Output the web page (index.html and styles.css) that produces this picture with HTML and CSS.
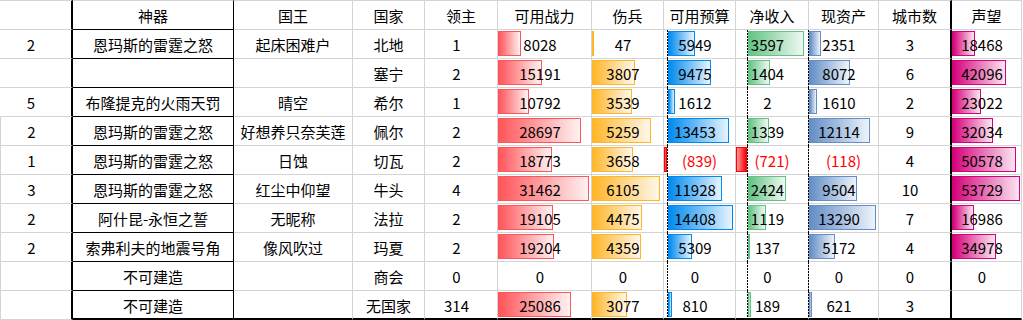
FILE: index.html
```html
<!DOCTYPE html>
<html lang="zh-CN">
<head>
<meta charset="utf-8">
<title>国家统计</title>
<link rel="stylesheet" href="styles.css">
</head>
<body>
<div class="sheet">
  <!-- header -->
  <div class="c h ca"></div>
  <div class="c h ck"><span>神器</span></div>
  <div class="c h"><span>国王</span></div>
  <div class="c h"><span>国家</span></div>
  <div class="c h"><span>领主</span></div>
  <div class="c h"><span>可用战力</span></div>
  <div class="c h"><span>伤兵</span></div>
  <div class="c h"><span>可用预算</span></div>
  <div class="c h"><span>净收入</span></div>
  <div class="c h"><span>现资产</span></div>
  <div class="c h cc"><span>城市数</span></div>
  <div class="c h"><span>声望</span></div>

  <!-- row 1 -->
  <div class="c ca n"><span>2</span></div>
  <div class="c ck"><span>恩玛斯的雷霆之怒</span></div>
  <div class="c"><span>起床困难户</span></div>
  <div class="c"><span>北地</span></div>
  <div class="c n"><span>1</span></div>
  <div class="c n cz"><i class="bar red pos" style="width:23px"></i><span>8028</span></div>
  <div class="c n cs"><i class="bar org pos" style="width:1px"></i><span>47</span></div>
  <div class="c n cy"><i class="ax"></i><i class="bar lbl pos" style="width:27px"></i><span>5949</span></div>
  <div class="c n cj"><i class="ax"></i><i class="bar grn pos" style="width:56px"></i><span>3597</span></div>
  <div class="c n cx"><i class="ax"></i><i class="bar blu pos" style="width:12px"></i><span>2351</span></div>
  <div class="c n cc"><span>3</span></div>
  <div class="c n cp"><i class="bar pur pos" style="width:23px"></i><span>18468</span></div>

  <!-- row 2 -->
  <div class="c ca"></div>
  <div class="c ck"></div>
  <div class="c"></div>
  <div class="c"><span>塞宁</span></div>
  <div class="c n"><span>2</span></div>
  <div class="c n cz"><i class="bar red pos" style="width:44px"></i><span>15191</span></div>
  <div class="c n cs"><i class="bar org pos" style="width:43px"></i><span>3807</span></div>
  <div class="c n cy"><i class="ax"></i><i class="bar lbl pos" style="width:43px"></i><span>9475</span></div>
  <div class="c n cj"><i class="ax"></i><i class="bar grn pos" style="width:22px"></i><span>1404</span></div>
  <div class="c n cx"><i class="ax"></i><i class="bar blu pos" style="width:41px"></i><span>8072</span></div>
  <div class="c n cc"><span>6</span></div>
  <div class="c n cp"><i class="bar pur pos" style="width:54px"></i><span>42096</span></div>

  <!-- row 3 -->
  <div class="c ca n"><span>5</span></div>
  <div class="c ck"><span>布隆提克的火雨天罚</span></div>
  <div class="c"><span>晴空</span></div>
  <div class="c"><span>希尔</span></div>
  <div class="c n"><span>1</span></div>
  <div class="c n cz"><i class="bar red pos" style="width:31px"></i><span>10792</span></div>
  <div class="c n cs"><i class="bar org pos" style="width:40px"></i><span>3539</span></div>
  <div class="c n cy"><i class="ax"></i><i class="bar lbl pos" style="width:7px"></i><span>1612</span></div>
  <div class="c n cj"><i class="ax"></i><span>2</span></div>
  <div class="c n cx"><i class="ax"></i><i class="bar blu pos" style="width:8px"></i><span>1610</span></div>
  <div class="c n cc"><span>2</span></div>
  <div class="c n cp"><i class="bar pur pos" style="width:29px"></i><span>23022</span></div>

  <!-- row 4 -->
  <div class="c ca n lb"><span>2</span></div>
  <div class="c ck"><span>恩玛斯的雷霆之怒</span></div>
  <div class="c"><span>好想养只奈芙莲</span></div>
  <div class="c"><span>佩尔</span></div>
  <div class="c n"><span>2</span></div>
  <div class="c n cz"><i class="bar red pos" style="width:83px"></i><span>28697</span></div>
  <div class="c n cs"><i class="bar org pos" style="width:59px"></i><span>5259</span></div>
  <div class="c n cy"><i class="ax"></i><i class="bar lbl pos" style="width:61px"></i><span>13453</span></div>
  <div class="c n cj"><i class="ax"></i><i class="bar grn pos" style="width:21px"></i><span>1339</span></div>
  <div class="c n cx"><i class="ax"></i><i class="bar blu pos" style="width:61px"></i><span>12114</span></div>
  <div class="c n cc"><span>9</span></div>
  <div class="c n cp"><i class="bar pur pos" style="width:41px"></i><span>32034</span></div>

  <!-- row 5 -->
  <div class="c ca n lb"><span>1</span></div>
  <div class="c ck"><span>恩玛斯的雷霆之怒</span></div>
  <div class="c"><span>日蚀</span></div>
  <div class="c"><span>切瓦</span></div>
  <div class="c n"><span>2</span></div>
  <div class="c n cz"><i class="bar red pos" style="width:54px"></i><span>18773</span></div>
  <div class="c n cs"><i class="bar org pos" style="width:41px"></i><span>3658</span></div>
  <div class="c neg cy"><i class="ax"></i><i class="bar ng" style="width:3px"></i><span>(839)</span></div>
  <div class="c neg cj"><i class="ax"></i><i class="bar ng" style="width:11px"></i><span>(721)</span></div>
  <div class="c neg cx"><i class="ax"></i><span>(118)</span></div>
  <div class="c n cc"><span>4</span></div>
  <div class="c n cp"><i class="bar pur pos" style="width:64px"></i><span>50578</span></div>

  <!-- row 6 -->
  <div class="c ca n lb"><span>3</span></div>
  <div class="c ck"><span>恩玛斯的雷霆之怒</span></div>
  <div class="c"><span>红尘中仰望</span></div>
  <div class="c"><span>牛头</span></div>
  <div class="c n"><span>4</span></div>
  <div class="c n cz"><i class="bar red pos" style="width:91px"></i><span>31462</span></div>
  <div class="c n cs"><i class="bar org pos" style="width:68px"></i><span>6105</span></div>
  <div class="c n cy"><i class="ax"></i><i class="bar lbl pos" style="width:54px"></i><span>11928</span></div>
  <div class="c n cj"><i class="ax"></i><i class="bar grn pos" style="width:38px"></i><span>2424</span></div>
  <div class="c n cx"><i class="ax"></i><i class="bar blu pos" style="width:48px"></i><span>9504</span></div>
  <div class="c n cc"><span>10</span></div>
  <div class="c n cp"><i class="bar pur pos" style="width:68px"></i><span>53729</span></div>

  <!-- row 7 -->
  <div class="c ca n lb"><span>2</span></div>
  <div class="c ck"><span>阿什昆-永恒之誓</span></div>
  <div class="c"><span>无昵称</span></div>
  <div class="c"><span>法拉</span></div>
  <div class="c n"><span>2</span></div>
  <div class="c n cz"><i class="bar red pos" style="width:55px"></i><span>19105</span></div>
  <div class="c n cs"><i class="bar org pos" style="width:50px"></i><span>4475</span></div>
  <div class="c n cy"><i class="ax"></i><i class="bar lbl pos" style="width:65px"></i><span>14408</span></div>
  <div class="c n cj"><i class="ax"></i><i class="bar grn pos" style="width:18px"></i><span>1119</span></div>
  <div class="c n cx"><i class="ax"></i><i class="bar blu pos" style="width:67px"></i><span>13290</span></div>
  <div class="c n cc"><span>7</span></div>
  <div class="c n cp"><i class="bar pur pos" style="width:22px"></i><span>16986</span></div>

  <!-- row 8 -->
  <div class="c ca n lb"><span>2</span></div>
  <div class="c ck"><span>索弗利夫的地震号角</span></div>
  <div class="c"><span>像风吹过</span></div>
  <div class="c"><span>玛夏</span></div>
  <div class="c n"><span>2</span></div>
  <div class="c n cz"><i class="bar red pos" style="width:56px"></i><span>19204</span></div>
  <div class="c n cs"><i class="bar org pos" style="width:49px"></i><span>4359</span></div>
  <div class="c n cy"><i class="ax"></i><i class="bar lbl pos" style="width:24px"></i><span>5309</span></div>
  <div class="c n cj"><i class="ax"></i><i class="bar grn pos" style="width:2px"></i><span>137</span></div>
  <div class="c n cx"><i class="ax"></i><i class="bar blu pos" style="width:26px"></i><span>5172</span></div>
  <div class="c n cc"><span>4</span></div>
  <div class="c n cp"><i class="bar pur pos" style="width:44px"></i><span>34978</span></div>

  <!-- row 9 -->
  <div class="c ca lb"></div>
  <div class="c ck"><span>不可建造</span></div>
  <div class="c"></div>
  <div class="c"><span>商会</span></div>
  <div class="c n"><span>0</span></div>
  <div class="c n cz"><span>0</span></div>
  <div class="c n cs"><span>0</span></div>
  <div class="c n cy"><i class="ax"></i><span>0</span></div>
  <div class="c n cj"><i class="ax"></i><span>0</span></div>
  <div class="c n cx"><i class="ax"></i><span>0</span></div>
  <div class="c n cc"><span>0</span></div>
  <div class="c n cp"><span>0</span></div>

  <!-- row 10 -->
  <div class="c ca lb"></div>
  <div class="c ck bt"><span>不可建造</span></div>
  <div class="c bt"></div>
  <div class="c bt"><span>无国家</span></div>
  <div class="c n bt"><span>314</span></div>
  <div class="c n cz bt"><i class="bar red pos" style="width:73px"></i><span>25086</span></div>
  <div class="c n cs bt"><i class="bar org pos" style="width:35px"></i><span>3077</span></div>
  <div class="c n cy bt"><i class="ax"></i><i class="bar lbl pos" style="width:4px"></i><span>810</span></div>
  <div class="c n cj bt"><i class="ax"></i><i class="bar grn pos" style="width:3px"></i><span>189</span></div>
  <div class="c n cx bt"><i class="ax"></i><i class="bar blu pos" style="width:3px"></i><span>621</span></div>
  <div class="c n cc bt"><span>3</span></div>
  <div class="c cp bt"></div>
</div>
</body>
</html>
```

FILE: styles.css
```css
html, body {
  margin: 0;
  padding: 0;
  background: #ffffff;
}

.sheet {
  display: grid;
  grid-template-columns: 73px 161px 119px 72px 73px 94px 72px 72px 73px 70px 73px 70px;
  grid-template-rows: 30px repeat(10, 29px);
  width: 1023px;
  font-family: "Noto Sans CJK SC", "Noto Sans", sans-serif;
  font-size: 15px;
  color: #000;
}

.c {
  box-sizing: border-box;
  position: relative;
  display: flex;
  align-items: center;
  justify-content: center;
  border-right: 1px solid #d4d4d4;
  border-bottom: 1px solid #d4d4d4;
  white-space: nowrap;
  line-height: 1;
  padding-top: 1px;
}

.c span {
  position: relative;
  z-index: 1;
}

.h {
  border-top: 1px solid #d4d4d4;
}

.ca {
  border-right: 2px solid #000;
}

.lb {
  border-left: 1px solid #d4d4d4;
}

.ck {
  border-right-color: #000;
  border-bottom-color: #000;
}

.cc {
  border-right: 2px solid #000;
}

.bt {
  border-bottom: 2px solid #000;
}

.n {
  padding-right: 9px;
}

.neg {
  color: #ff0000;
}

/* data bars */
.bar {
  position: absolute;
  top: 1px;
  height: 25px;
  box-sizing: border-box;
  border: 1px solid;
  z-index: 0;
}

.pos {
  left: 0;
}

.red {
  border-color: #ff555a;
  background: linear-gradient(to right, #ff555a, #fff2f2);
}

.org {
  border-color: #ffb628;
  background: linear-gradient(to right, #ffb628, #fff7ea);
}

.lbl {
  border-color: #008aef;
  background: linear-gradient(to right, #008aef, #e6f4ff);
}

.grn {
  border-color: #63c384;
  background: linear-gradient(to right, #63c384, #eff9f2);
}

.blu {
  border-color: #638ec6;
  background: linear-gradient(to right, #638ec6, #eef3fa);
}

.pur {
  border-color: #d6007b;
  background: linear-gradient(to right, #d6007b, #fbe6f1);
}

.ng {
  left: 0;
  border-color: #ff0000;
  background: linear-gradient(to left, #ff0000, #ff9a9a);
}

/* negative value axis */
.ax {
  position: absolute;
  top: 0;
  bottom: -1px;
  width: 1px;
  z-index: 2;
  background: repeating-linear-gradient(to bottom, #000 0 2px, transparent 2px 3px);
}

.bt .ax {
  bottom: 0;
}

.cy .ax { left: 3px; }
.cy .pos { left: 4px; }

.cj .ax { left: 11px; }
.cj .pos { left: 12px; }

.cx .ax { left: -1px; }
.cx .pos { left: 0; }
```
